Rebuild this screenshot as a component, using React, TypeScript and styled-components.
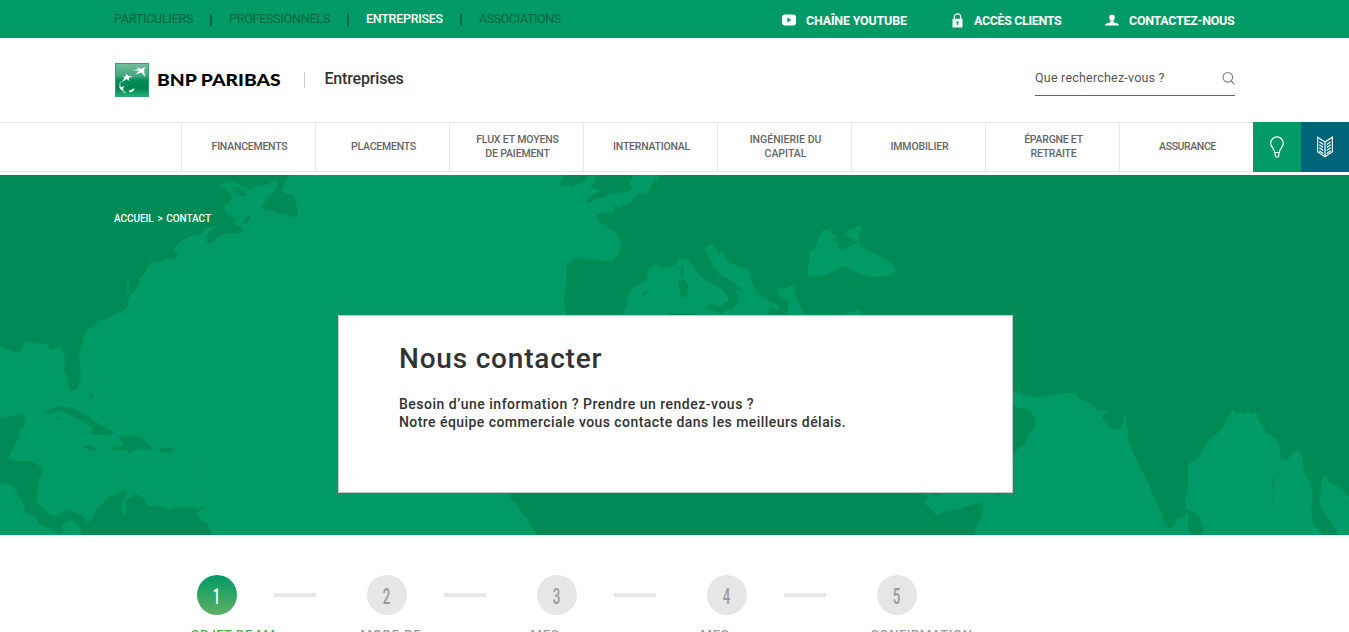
import React from 'react';
import styled, { createGlobalStyle } from 'styled-components';

const Global = createGlobalStyle`
  * { box-sizing: border-box; }
  html, body { margin: 0; height: 632px; overflow: hidden; background: #fff; }
  body { font-family: Roboto, "Liberation Sans", sans-serif; color: #333; }
`;

const Page = styled.div`
  height: 632px;
  overflow: hidden;
`;

const TopBar = styled.header`
  height: 38px;
  display: flex;
  justify-content: space-between;
  padding: 0 115px 0 114px;
  background: #009a66;
`;

const Segments = styled.nav`
  display: flex;
  align-items: center;
  height: 38px;
`;

const Segment = styled.a<{ $active?: boolean; $width: number; $spacing: number }>`
  width: ${(p) => p.$width}px;
  white-space: nowrap;
  font-size: 12.5px;
  line-height: 38px;
  letter-spacing: ${(p) => p.$spacing}px;
  font-weight: ${(p) => (p.$active ? 500 : 400)};
  color: ${(p) => (p.$active ? '#fff' : '#006643')};
`;

const Separator = styled.i`
  width: 2px;
  height: 12px;
  margin: 2px 17px 0 16px;
  background: #006643;
`;

const QuickLinks = styled.div`
  display: flex;
  align-items: center;
  height: 40px;
`;

const QuickLink = styled.a<{ $width: number; $gap: number; $spacing: number }>`
  display: flex;
  align-items: center;
  gap: ${(p) => p.$gap}px;
  width: ${(p) => p.$width}px;
  white-space: nowrap;
  color: #fff;
  font-size: 12.5px;
  font-weight: 700;
  letter-spacing: ${(p) => p.$spacing}px;
  svg { flex: none; }
`;

const Masthead = styled.div`
  height: 84px;
  display: flex;
  justify-content: space-between;
  padding: 0 114px 0 115px;
`;

const Brand = styled.div`
  display: flex;
  align-items: center;
  height: 84px;
`;

const BrandName = styled.span`
  width: 147px;
  margin-left: 8px;
  white-space: nowrap;
  font-family: Lato, sans-serif;
  font-weight: 900;
  font-size: 16.8px;
  line-height: 22px;
  transform: scaleX(1.15);
  transform-origin: left;
  color: #000;
`;

const BrandSection = styled.span`
  height: 16px;
  padding-left: 19.5px;
  border-left: 1px solid #ccc;
  font-size: 16px;
  font-weight: 500;
  line-height: 13px;
  letter-spacing: -0.18px;
`;

const Search = styled.div`
  display: flex;
  justify-content: space-between;
  align-items: center;
  width: 200px;
  height: 35px;
  margin-top: 23px;
  border-bottom: 1px solid #666;
  font-size: 12.5px;
  letter-spacing: 0.21px;
  line-height: 16px;
  padding-bottom: 1px;
  color: #555;
  white-space: nowrap;
`;

const MainNav = styled.nav`
  height: 50px;
  display: flex;
  padding-left: 181px;
  border-top: 1px solid #e6e6e6;
  border-bottom: 1px solid #e6e6e6;
`;

const NavItem = styled.a<{ $spacing?: number }>`
  flex: 0 0 134px;
  display: flex;
  align-items: center;
  justify-content: center;
  border-left: 1px solid #e8e8e8;
  padding-left: 2px;
  text-align: center;
  white-space: pre-line;
  font-size: 10.5px;
  line-height: 14px;
  font-weight: 500;
  letter-spacing: ${(p) => p.$spacing ?? -0.23}px;
  color: #666;
`;

const NavTile = styled.a<{ $color: string }>`
  flex: 0 0 48px;
  height: 50px;
  margin-top: -1px;
  display: flex;
  align-items: center;
  justify-content: center;
  background: ${(p) => p.$color};
`;

const Hero = styled.section`
  position: relative;
  height: 360px;
  margin-top: 3px;
  display: flex;
  flex-direction: column;
  background: #009a66;
`;

const WorldMap = styled.svg`
  position: absolute;
  inset: 0;
`;

const Breadcrumb = styled.div`
  position: relative;
  height: 140px;
  padding: 37px 0 0 114px;
  color: #fff;
  font-size: 10px;
  line-height: 13px;
  font-weight: 500;
  letter-spacing: -0.05px;
  word-spacing: 1.3px;
`;

const ContactCard = styled.article`
  position: relative;
  width: 675px;
  height: 178px;
  margin-left: 338px;
  padding: 25px 60px 24px;
  background: #fff;
  border: 1px solid #c4c9c6;
`;

const Title = styled.h1`
  margin: 0;
  font-size: 28px;
  font-weight: 500;
  line-height: 36px;
  letter-spacing: 0.8px;
  color: #333;
`;

const Intro = styled.p`
  margin: 18px 0 0;
  font-size: 14px;
  line-height: 18px;
  font-weight: 500;
  color: #333;
  white-space: nowrap;
`;

const IntroLine = styled.span<{ $spacing: number }>`
  display: block;
  letter-spacing: ${(p) => p.$spacing}px;
`;

const Steps = styled.ol`
  list-style: none;
  display: flex;
  margin: 0;
  padding: 40px 0 0 190px;
`;

const Step = styled.li`
  flex: 0 0 170px;
`;

const StepTrack = styled.div`
  display: flex;
  align-items: center;
  padding-left: 7px;
`;

const StepBadge = styled.span<{ $active: boolean }>`
  width: 40px;
  height: 40px;
  border-radius: 50%;
  display: flex;
  align-items: center;
  justify-content: center;
  background: ${(p) => (p.$active ? 'linear-gradient(#009a66, #5fb062)' : '#e6e6e6')};
  color: ${(p) => (p.$active ? '#fff' : '#999')};
  font-size: 22px;
  font-weight: 500;
  line-height: 40px;
`;

const StepNumber = styled.span`
  transform: scaleX(0.6);
  padding: 3px 1px 0 0;
`;

const StepLine = styled.i`
  width: 42px;
  height: 4px;
  margin-left: 37px;
  background: #e6e6e6;
`;

const StepLabel = styled.div<{ $active: boolean; $spacing: number }>`
  margin-top: 11px;
  padding-left: 0.5px;
  white-space: nowrap;
  font-size: 13px;
  line-height: 18px;
  font-weight: 500;
  letter-spacing: ${(p) => p.$spacing}px;
  color: ${(p) => (p.$active ? '#4caf50' : '#999')};
`;

const LogoMark = () => (
  <svg width="34" height="34" viewBox="0 0 34 34">
    <defs>
      <linearGradient id="mark" x1="0" y1="0" x2="0" y2="1">
        <stop offset="0" stopColor="#74bd9c" />
        <stop offset=".38" stopColor="#3fa67c" />
        <stop offset=".5" stopColor="#008e58" />
        <stop offset=".77" stopColor="#008450" />
        <stop offset="1" stopColor="#20b272" />
      </linearGradient>
    </defs>
    <rect width="34" height="34" fill="#2fa377" />
    <rect x="1" y="1" width="32" height="32" fill="url(#mark)" />
    <g fill="#fff">
      <path d="M22 4l4 2 4-2-1 3.500 1 6.500-3.500-4.500-6 2 4-4-6.500 0 5.500-1.500z" />
      <path d="M11.500 10.500l1.500 2.500 5 .5-4.300 1.300.8 3.200-3-2-5 3.500 3-5-1.500-1h2.500z" />
      <path d="M4.500 22l2 2 3-1-1.500 2.500 1 2.500-2.500-.7-2-2z" />
      <path d="M13.500 28l2.500-1 3.500-2-1 3-3.500 1.500z" />
    </g>
    <path d="M5.800 18.500q-1.300 1.800-1 3.500M7.500 28.500q1.500 1 3.500 1" fill="none" stroke="#fff" strokeWidth=".7" />
  </svg>
);

const YoutubeIcon = () => (
  <svg width="14" height="12" viewBox="0 0 14 12">
    <rect y="0.5" width="14" height="11" rx="3" fill="#fff" />
    <path d="M5.300 3.600v4.800L9.300 6z" fill="#009a66" />
  </svg>
);

const LockIcon = () => (
  <svg width="11" height="15" viewBox="0 0 11 15">
    <path d="M2.300 7V4a3.200 3.200 0 0 1 6.400 0v3" fill="none" stroke="#fff" strokeWidth="1.200" />
    <rect x=".5" y="5.800" width="10" height="8.700" rx=".6" fill="#fff" />
    <path d="M4.400 8.400h2.200v1.800h-.5V12H4.900v-1.800h-.5z" fill="#009a66" />
  </svg>
);

const PersonIcon = () => (
  <svg width="14" height="12" viewBox="0 0 14 12">
    <path d="M7 .5c1.900 0 2.800 1.200 2.800 3 0 1.500-.7 2.500-1.400 3.200v1.500c2.600.5 5.400 1 5.600 3.300H0c.2-2.300 3-2.800 5.600-3.300V6.700C4.900 6 4.200 5 4.200 3.500c0-1.800.9-3 2.800-3z" fill="#fff" />
  </svg>
);

const SearchIcon = () => (
  <svg width="13" height="14" viewBox="0 0 13 14" fill="none" stroke="#777" strokeWidth="1.1">
    <circle cx="5.800" cy="6.300" r="4.800" />
    <path d="M9.200 9.800l3.200 3.500" />
  </svg>
);

const BulbIcon = () => (
  <svg width="16" height="22" viewBox="0 0 16 22" fill="none" stroke="#fff" strokeWidth="1.200">
    <path d="M5.700 16.500C5.400 12.500 1.700 11.500 1.700 7.200a6.300 6.300 0 0 1 12.600 0c0 4.300-3.700 5.300-4 9.300z" />
    <path d="M5.900 17l.5 2.800q.2 1.200 1.100 1.200h1q.9 0 1.100-1.200l.5-2.800" />
  </svg>
);

const BookIcon = () => (
  <svg width="18" height="22" viewBox="0 0 18 22" fill="none" stroke="#fff" strokeWidth="1.200">
    <path d="M1.600 1.200L9 6l7.400-4.800v14.600L9 20.800l-7.400-5zM9 6v14.800" />
    <path d="M3.300 5.800L7.200 8.400M3.300 8.800L7.200 11.400M3.300 11.800L7.200 14.400M3.300 14.800L7.200 17.400M14.700 5.800L10.800 8.400M14.700 8.800L10.800 11.400M14.700 11.800L10.800 14.400M14.700 14.800L10.800 17.400" />
  </svg>
);

const landMasses = [
  '0,175 290,175 284,184 282,191 287,194 294,196 296,202 297,208 297,217 290,217 287,214 280,215 275,211 266,210 260,207 266,201 268,197 272,194 278,185 276,180 268,184 262,186 257,186 250,191 243,187 239,184 232,181 225,182 219,188 225,188 229,193 232,197 230,202 224,205 225,212 231,218 236,219 233,222 236,225 243,228 243,233 225,234 218,237 214,242 210,244 206,241 208,232 219,226 215,226 204,229 202,234 193,235 186,238 179,243 174,248 175,252 179,254 177,258 165,260 160,262 149,263 146,271 139,279 140,283 134,291 130,295 128,301 128,306 124,310 114,315 108,318 100,320 92,327 85,332 82,343 79,356 80,367 81,378 78,388 73,391 69,388 67,377 64,371 65,358 62,349 57,348 51,350 46,344 34,343 29,341 24,343 22,349 17,353 8,350 0,346',
  '0,417 14,416 16,414 24,415 26,420 24,427 19,430 19,437 15,444 12,450 7,459 18,461 34,461 36,464 42,467 42,473 39,478 38,488 36,501 44,509 50,515 57,516 63,511 69,509 75,513 81,514 85,519 86,523 93,518 97,508 105,501 109,497 119,494 122,490 128,491 125,497 122,502 121,510 126,516 127,509 125,500 132,497 134,493 137,494 144,499 147,506 162,506 169,510 178,507 189,507 197,509 200,510 197,514 201,521 208,525 213,535 82,535 79,526 74,521 67,521 62,525 64,531 60,534 51,530 47,527 39,524 36,517 25,513 23,502 17,494 13,485 9,484 0,483',
  '44,414 51,408 58,406 67,407 75,409 80,413 87,415 94,421 102,426 114,432 110,435 98,435 88,433 94,430 87,424 82,420 76,419 68,414 60,410 50,414',
  '118,436 127,437 133,435 140,437 146,442 153,448 149,450 137,449 130,453 126,450 114,450 112,447 123,446 122,440',
  '82,447 90,445 98,449 91,451', '160,449 168,447 173,449 170,453 160,452',
  '90,382 95,380 94,382', '100,379 102,382 101,384', '91,392 94,396 92,399 89,396', '105,391 106,395 110,399 107,397', '118,426 123,426 120,428', '54,418 58,417 60,418 56,420',
  '200,508 204,504 202,511', '197,472 200,472 199,474', '191,460 194,461 192,462', '198,491 201,491 199,493',
  '563,175 588,175 585,182 576,184 573,187 567,185 559,187 563,179',
  '596,175 634,175 630,183 632,189 625,192 610,194 602,198 595,199 591,203 585,203 590,197 598,192 602,191 590,187 595,181',
  '660,175 658,185 655,178 652,183 651,188 646,193 637,194 634,199 628,204 622,205 620,208 613,204 615,212 608,213 597,214 598,222 604,224 610,229 618,234 620,240 622,244 619,253 613,261 589,260 580,258 574,259 572,262 567,264 566,285 564,298 567,316 622,316 627,307 626,298 632,288 645,281 648,277 648,269 655,264 663,268 674,266 679,259 686,258 693,266 703,279 718,286 727,294 728,301 724,303 721,306 710,304 705,307 716,312 721,314 725,310 732,309 739,301 737,292 734,289 744,291 734,282 720,275 712,264 705,250 707,245 713,244 719,255 722,250 728,262 740,267 748,269 751,280 756,291 765,299 779,306 779,309 769,307 769,316 788,316 788,301 780,296 776,288 785,289 795,284 794,293 799,303 804,314 840,315 860,310 862,316 1013,316 1349,316 1349,175',
  '683,265 684,276 681,277 680,270', '678,282 684,279 688,285 687,297 681,298', '641,294 647,290 648,293 642,296', '663,316 670,313 697,313 695,316',
  '508,492 511,499 518,505 520,512 526,516 537,535 974,535 977,525 982,515 983,502 976,504 966,506 960,509 947,511 937,515 925,503 928,497 925,492',
  '1013,316 1349,316 1349,535 1013,535', '930,493 942,493 939,496 934,496', '992,493 1004,493 997,496',
];

const waters = [
  '807,275 808,265 810,257 809,252 815,249 818,240 821,232 827,230 832,228 831,234 840,233 850,230 857,226 862,225 860,231 858,238 861,247 872,252 882,257 891,263 896,271 890,276 872,277 858,273 850,269 843,266 835,271 824,275 812,277',
  '1013,392 1024,395 1040,397 1052,395 1064,393 1075,393 1080,399 1087,402 1095,407 1097,411 1107,411 1101,417 1109,427 1115,430 1120,428 1124,423 1122,418 1127,415 1125,421 1128,429 1128,439 1135,457 1142,472 1148,481 1152,493 1162,514 1164,523 1169,528 1174,525 1176,519 1182,517 1188,513 1187,507 1181,515 1186,505 1185,497 1188,486 1188,466 1191,462 1199,457 1205,447 1209,439 1218,433 1225,423 1227,418 1233,410 1237,414 1240,412 1244,414 1248,412 1253,414 1256,411 1258,419 1264,430 1270,435 1276,439 1280,447 1281,459 1287,460 1297,449 1302,457 1304,471 1310,482 1313,495 1311,508 1313,523 1323,535 1013,535',
  '1338,535 1332,523 1325,515 1320,505 1321,489 1322,477 1326,475 1330,483 1336,485 1343,491 1349,498 1349,535',
];

const islands = [
  '832,240 840,235 850,237 854,240 859,243 850,246 843,250 838,248 838,243', '828,231 842,228 848,233 838,237',
  '1013,406 1026,409 1031,412 1036,420 1034,429 1027,436 1025,444 1018,448 1013,457',
  '1189,511 1195,513 1200,518 1203,529 1203,535 1189,535 1188,520',
  '1274,474 1275,482 1273,492 1272,485', '1272,498 1274,497 1273,502', '1013,493 1015,493 1013,495',
];

const Shapes = ({ points, fill }: { points: string[]; fill: string }) => (
  <g fill={fill}>{points.map((p) => <polygon key={p} points={p} />)}</g>
);

const navigation: { label: string; spacing?: number }[] = [
  { label: 'FINANCEMENTS' }, { label: 'PLACEMENTS' }, { label: 'FLUX ET MOYENS\nDE PAIEMENT', spacing: -0.13 },
  { label: 'INTERNATIONAL' }, { label: 'INGÉNIERIE DU\nCAPITAL', spacing: 0 }, { label: 'IMMOBILIER', spacing: -0.12 },
  { label: 'ÉPARGNE ET\nRETRAITE' }, { label: 'ASSURANCE', spacing: -0.4 },
];

const steps = [
  { label: 'OBJET DE MA', spacing: 0.48 }, { label: 'MODE DE', spacing: 0.85 }, { label: 'MES', spacing: 0.8 },
  { label: 'MES', spacing: 0.8 }, { label: 'CONFIRMATION', spacing: 0.6 },
];

export default function App() {
  return (
    <Page>
      <Global />
      <TopBar>
        <Segments>
          <Segment $width={80} $spacing={-0.22}>PARTICULIERS</Segment>
          <Separator />
          <Segment $width={102} $spacing={-0.22}>PROFESSIONNELS</Segment>
          <Separator />
          <Segment $width={78} $spacing={-0.27} $active>ENTREPRISES</Segment>
          <Separator />
          <Segment $width={84} $spacing={-0.38}>ASSOCIATIONS</Segment>
        </Segments>
        <QuickLinks>
          <QuickLink $width={170} $gap={10} $spacing={-0.2}><YoutubeIcon />CHAÎNE YOUTUBE</QuickLink>
          <QuickLink $width={153} $gap={11} $spacing={-0.37}><LockIcon />ACCÈS CLIENTS</QuickLink>
          <QuickLink $width={129} $gap={10} $spacing={-0.29}><PersonIcon />CONTACTEZ-NOUS</QuickLink>
        </QuickLinks>
      </TopBar>
      <Masthead>
        <Brand>
          <LogoMark />
          <BrandName>BNP PARIBAS</BrandName>
          <BrandSection>Entreprises</BrandSection>
        </Brand>
        <Search>Que recherchez-vous ?<SearchIcon /></Search>
      </Masthead>
      <MainNav>
        {navigation.map((n) => <NavItem key={n.label} $spacing={n.spacing}>{n.label}</NavItem>)}
        <NavTile $color="#009a66"><BulbIcon /></NavTile>
        <NavTile $color="#006478"><BookIcon /></NavTile>
      </MainNav>
      <Hero>
        <WorldMap width="1349" height="360" viewBox="0 175 1349 360">
          <Shapes points={landMasses} fill="#008a55" />
          <Shapes points={waters} fill="#009a66" />
          <Shapes points={islands} fill="#008a55" />
          <polygon points="232,187 240,187 248,195 241,196" fill="#008a55" />
          <path d="M128 279v16" stroke="#009a66" strokeWidth="1.500" />
          <path d="M226 214l4 5 6 1M249 216l-5 8" fill="none" stroke="#008a55" strokeWidth="3" />
        </WorldMap>
        <Breadcrumb>ACCUEIL &gt; CONTACT</Breadcrumb>
        <ContactCard>
          <Title>Nous contacter</Title>
          <Intro>
            <IntroLine $spacing={0.5}>Besoin d’une information ? Prendre un rendez-vous ?</IntroLine>
            <IntroLine $spacing={0.44}>Notre équipe commerciale vous contacte dans les meilleurs délais.</IntroLine>
          </Intro>
        </ContactCard>
      </Hero>
      <Steps>
        {steps.map((s, i) => (
          <Step key={i}>
            <StepTrack>
              <StepBadge $active={i === 0}><StepNumber>{i + 1}</StepNumber></StepBadge>
              {i < 4 && <StepLine />}
            </StepTrack>
            <StepLabel $active={i === 0} $spacing={s.spacing}>{s.label}</StepLabel>
          </Step>
        ))}
      </Steps>
    </Page>
  );
}
